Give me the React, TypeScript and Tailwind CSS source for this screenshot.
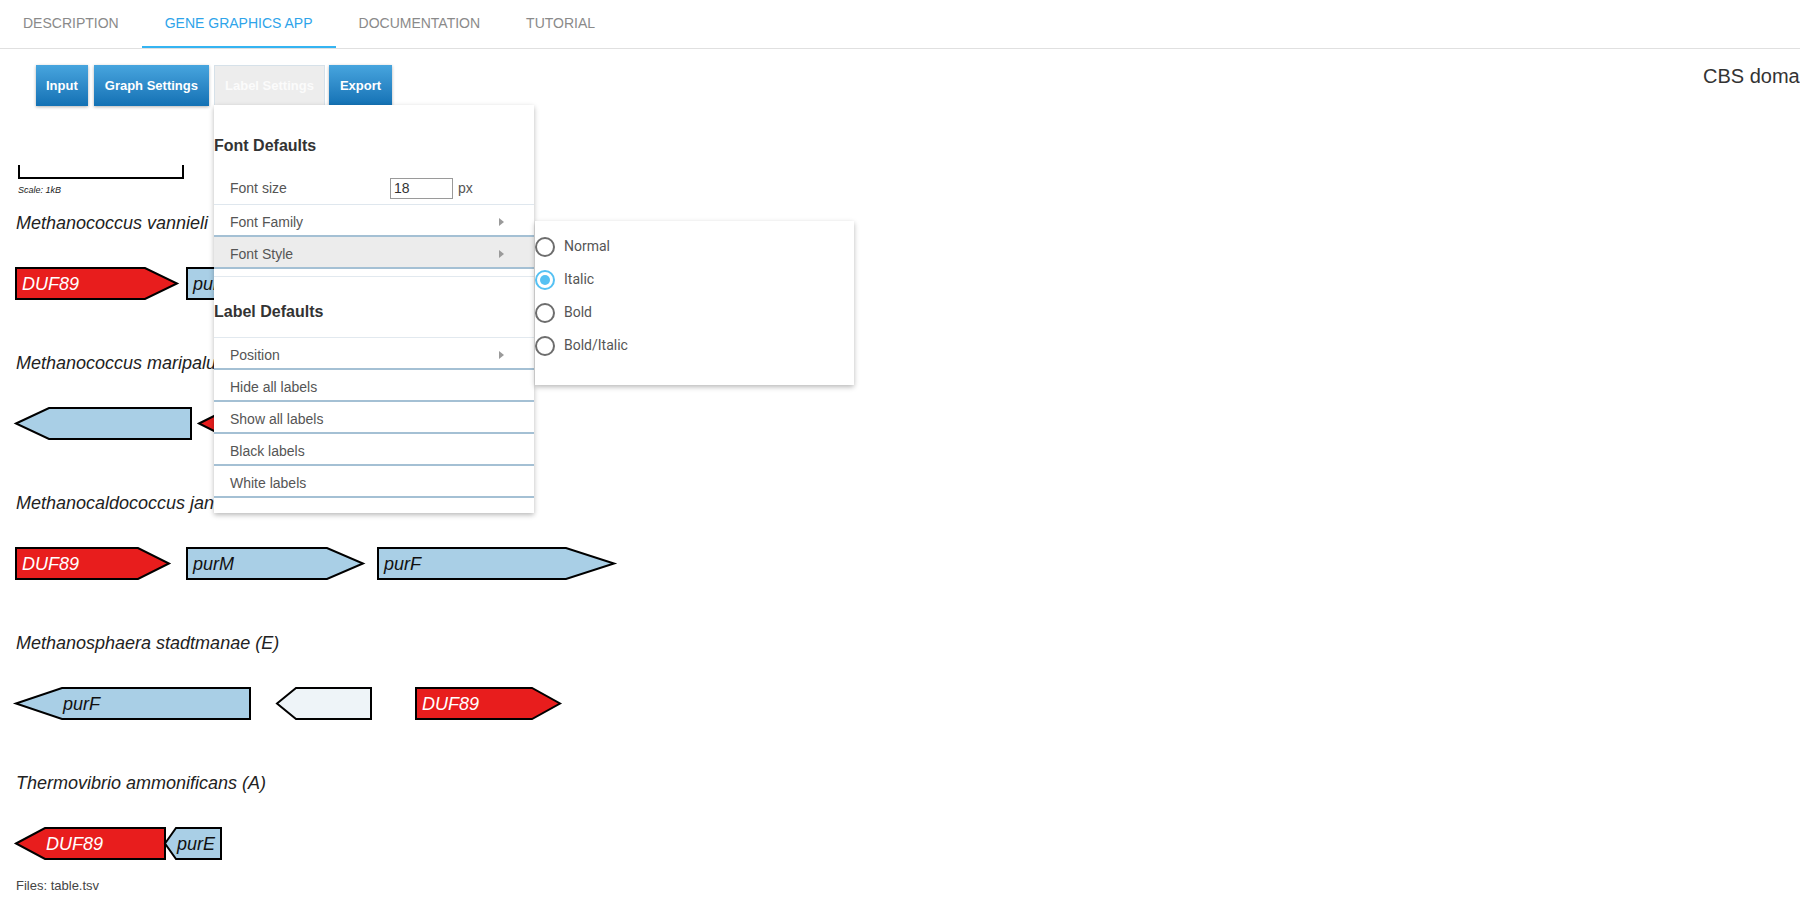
import React from 'react';

type Gene = {
  x1: number;
  b: number;
  x2: number;
  dir: 'r' | 'l';
  fill: string;
  label?: string;
  light?: boolean;
};

type Track = { species: string; genes: Gene[] };

const RED = '#e81d1d';
const BLUE = '#a9cfe6';
const PALE = '#eef4f8';

const tracks: Track[] = [
  {
    species: 'Methanococcus vannieli',
    genes: [
      { x1: 16, b: 145, x2: 177, dir: 'r', fill: RED, label: 'DUF89', light: true },
      { x1: 187, b: 330, x2: 365, dir: 'r', fill: BLUE, label: 'purM' },
    ],
  },
  {
    species: 'Methanococcus maripaludis',
    genes: [
      { x1: 16, b: 49, x2: 191, dir: 'l', fill: BLUE },
      { x1: 199, b: 230, x2: 330, dir: 'l', fill: RED, label: 'DUF89', light: true },
    ],
  },
  {
    species: 'Methanocaldococcus jannaschii',
    genes: [
      { x1: 16, b: 138, x2: 169, dir: 'r', fill: RED, label: 'DUF89', light: true },
      { x1: 187, b: 327, x2: 363, dir: 'r', fill: BLUE, label: 'purM' },
      { x1: 378, b: 566, x2: 614, dir: 'r', fill: BLUE, label: 'purF' },
    ],
  },
  {
    species: 'Methanosphaera stadtmanae (E)',
    genes: [
      { x1: 16, b: 62, x2: 250, dir: 'l', fill: BLUE, label: 'purF' },
      { x1: 277, b: 296, x2: 371, dir: 'l', fill: PALE },
      { x1: 416, b: 532, x2: 560, dir: 'r', fill: RED, label: 'DUF89', light: true },
    ],
  },
  {
    species: 'Thermovibrio ammonificans (A)',
    genes: [
      { x1: 16, b: 45, x2: 165, dir: 'l', fill: RED, label: 'DUF89', light: true },
      { x1: 165, b: 176, x2: 221, dir: 'l', fill: BLUE, label: 'purE' },
    ],
  },
];

const tabs = ['DESCRIPTION', 'GENE GRAPHICS APP', 'DOCUMENTATION', 'TUTORIAL'];

function genePoints(g: Gene) {
  const t = 2;
  const bt = 33;
  const m = 17.5;
  if (g.dir === 'r') {
    return `${g.x1},${t} ${g.b},${t} ${g.x2},${m} ${g.b},${bt} ${g.x1},${bt}`;
  }
  return `${g.x1},${m} ${g.b},${t} ${g.x2},${t} ${g.x2},${bt} ${g.b},${bt}`;
}

function GeneRow({ genes }: { genes: Gene[] }) {
  return (
    <svg width="640" height="36" className="block -ml-[16px] mt-[33px]">
      {genes.map((g, i) => (
        <g key={i}>
          <polygon
            points={genePoints(g)}
            fill={g.fill}
            stroke="#000"
            strokeWidth="2"
            strokeLinejoin="miter"
          />
          {g.label && (
            <text
              x={g.dir === 'r' ? g.x1 + 6 : g.b + 1}
              y="24"
              fontSize="18"
              fontStyle="italic"
              fontFamily="'Liberation Sans', Arial, sans-serif"
              fill={g.light ? '#fff' : '#111'}
            >
              {g.label}
            </text>
          )}
        </g>
      ))}
    </svg>
  );
}

function Arrow() {
  return (
    <svg width="5" height="8" viewBox="0 0 5 8" className="ml-auto mr-[30px]">
      <path d="M0 0 L5 4 L0 8 Z" fill="#9a9a9a" />
    </svg>
  );
}

function Radio({ checked, label }: { checked?: boolean; label: string }) {
  return (
    <div className="h-[33px] flex items-center">
      <span
        className={
          checked
            ? 'w-[20px] h-[20px] rounded-full border-2 border-[#55c1f3] flex items-center justify-center'
            : 'w-[20px] h-[20px] rounded-full border-2 border-[#6d6d6d]'
        }
      >
        {checked && <span className="w-[10px] h-[10px] rounded-full bg-[#55c1f3]" />}
      </span>
      <span className="ml-[9px] text-[14px] text-[#555]">{label}</span>
    </div>
  );
}

function MenuRow({ label, arrow, active }: { label: string; arrow?: boolean; active?: boolean }) {
  return (
    <div
      className={
        'h-[32px] flex items-center pt-[4px] pl-[16px] border-b-2 border-[#a4c0d4] text-[14px] text-[#555] ' +
        (active ? 'bg-[#ececec]' : 'bg-white')
      }
    >
      <span>{label}</span>
      {arrow && <Arrow />}
    </div>
  );
}

function LabelMenu() {
  return (
    <div className="absolute left-[214px] top-[56px] w-[320px] h-[408px] bg-white shadow-[0_2px_5px_rgba(0,0,0,0.28)] z-10">
      <div className="h-[67px] pt-[31px]">
        <div className="leading-[20px] text-[16px] font-bold text-[#333]">Font Defaults</div>
      </div>
      <div className="h-[33px] flex items-center pt-[1px] pl-[16px] border-b border-[#dfe7ee] text-[14px] text-[#555]">
        <span className="w-[160px]">Font size</span>
        <span className="w-[63px] h-[21px] border border-[#9a9a9a] text-[14px] text-[#333] leading-[19px] pl-[3px]">
          18
        </span>
        <span className="ml-[5px]">px</span>
      </div>
      <MenuRow label="Font Family" arrow />
      <MenuRow label="Font Style" arrow active />
      <div className="mt-[7px] h-[62px] border-t border-b border-[#e2e9ef] pt-[25px]">
        <div className="leading-[20px] text-[16px] font-bold text-[#333]">Label Defaults</div>
      </div>
      <MenuRow label="Position" arrow />
      <MenuRow label="Hide all labels" />
      <MenuRow label="Show all labels" />
      <MenuRow label="Black labels" />
      <MenuRow label="White labels" />
    </div>
  );
}

function StyleSubmenu() {
  return (
    <div className="absolute left-[535px] top-[172px] w-[319px] h-[164px] bg-white shadow-[0_2px_5px_rgba(0,0,0,0.28)] z-10 pt-[9px] font-['Roboto','Liberation_Sans',sans-serif]">
      <Radio label="Normal" />
      <Radio label="Italic" checked />
      <Radio label="Bold" />
      <Radio label="Bold/Italic" />
    </div>
  );
}

export default function App() {
  return (
    <div className="w-full h-[900px] overflow-hidden bg-white font-['Liberation_Sans',Arial,sans-serif]">
      <nav className="h-[49px] flex border-b border-[#e0e0e0]">
        {tabs.map((t, i) => (
          <div
            key={t}
            className={
              'h-[48px] px-[23px] flex items-center text-[14px] ' +
              (i === 1
                ? 'text-[#2ea4ea] border-b-2 border-[#35b4f2]'
                : 'text-[#8a8a8a] border-b-2 border-transparent')
            }
          >
            {t}
          </div>
        ))}
      </nav>

      <div className="relative">
        <div className="flex items-start pt-[16px]">
          <div className="flex gap-[6px] pl-[36px]">
            <button className="h-[41px] px-[10px] text-[13px] font-bold text-white bg-linear-to-b from-[#47a5de] to-[#1271b4] shadow-[0_1px_3px_rgba(0,0,0,0.3)]">
              Input
            </button>
            <button className="h-[41px] px-[11px] text-[13px] font-bold text-white bg-linear-to-b from-[#47a5de] to-[#1271b4] shadow-[0_1px_3px_rgba(0,0,0,0.3)]">
              Graph Settings
            </button>
            <button className="-ml-[1px] h-[41px] w-[111px] text-[13px] font-bold text-[#fbfbfb] bg-[#ededed] border border-[#d6e1e9]">
              Label Settings
            </button>
            <button className="-ml-[2px] h-[41px] px-[11px] text-[13px] font-bold text-white bg-linear-to-b from-[#47a5de] to-[#1271b4] shadow-[0_1px_3px_rgba(0,0,0,0.3)]">
              Export
            </button>
          </div>
          <div className="flex-1" />
          <div className="w-[97px] overflow-hidden whitespace-nowrap text-[20px] leading-[23px] text-[#333]">
            CBS domain proteins
          </div>
        </div>

        <LabelMenu />
        <StyleSubmenu />

        <div className="pl-[16px] flex flex-col">
          <svg width="170" height="20" className="block mt-[57px]">
            <path d="M3 2 V15 H167 V2" fill="none" stroke="#000" strokeWidth="2" />
          </svg>
          <div className="mt-[2px] ml-[2px] text-[9px] leading-[10px] italic text-[#222]">Scale: 1kB</div>

          {tracks.map((tr, i) => (
            <div key={tr.species} className={i === 0 ? 'mt-[18px]' : 'mt-[51px]'}>
              <div className="h-[20px] leading-[20px] text-[18px] italic text-[#222] whitespace-nowrap">
                {tr.species}
              </div>
              <GeneRow genes={tr.genes} />
            </div>
          ))}

          <div className="mt-[16px] text-[13px] leading-[16px] text-[#444]">Files: table.tsv</div>
        </div>
      </div>
    </div>
  );
}
